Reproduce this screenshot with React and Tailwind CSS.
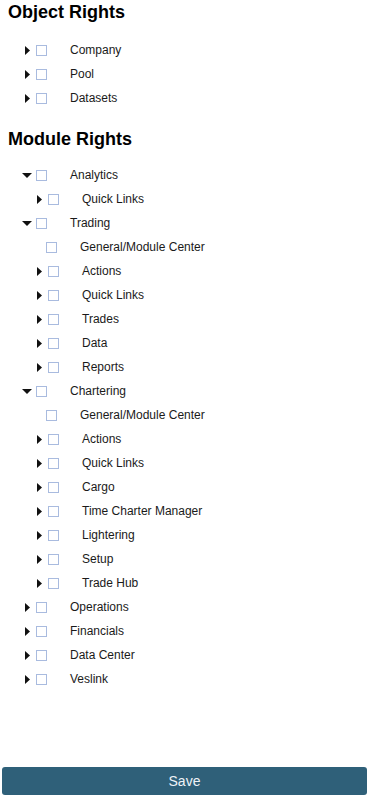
import { useState } from 'react'

const OBJECT_RIGHTS = [
  { label: 'Company', children: [] },
  { label: 'Pool', children: [] },
  { label: 'Datasets', children: [] },
]

const MODULE_RIGHTS = [
  { label: 'Analytics', open: true, children: [{ label: 'Quick Links', children: [] }] },
  {
    label: 'Trading',
    open: true,
    children: [
      { label: 'General/Module Center', leaf: true },
      { label: 'Actions', children: [] },
      { label: 'Quick Links', children: [] },
      { label: 'Trades', children: [] },
      { label: 'Data', children: [] },
      { label: 'Reports', children: [] },
    ],
  },
  {
    label: 'Chartering',
    open: true,
    children: [
      { label: 'General/Module Center', leaf: true },
      { label: 'Actions', children: [] },
      { label: 'Quick Links', children: [] },
      { label: 'Cargo', children: [] },
      { label: 'Time Charter Manager', children: [] },
      { label: 'Lightering', children: [] },
      { label: 'Setup', children: [] },
      { label: 'Trade Hub', children: [] },
    ],
  },
  { label: 'Operations', children: [] },
  { label: 'Financials', children: [] },
  { label: 'Data Center', children: [] },
  { label: 'Veslink', children: [] },
]

function Caret({ open }) {
  if (open) {
    return (
      <svg width="10" height="5" viewBox="0 0 10 5">
        <polygon points="0,0 10,0 5,5" fill="#111" />
      </svg>
    )
  }
  return (
    <svg width="5" height="9" viewBox="0 0 5 9">
      <polygon points="0,0 5,4.5 0,9" fill="#111" />
    </svg>
  )
}

function TreeNode({ node, level }) {
  const [open, setOpen] = useState(!!node.open)
  const pad = level === 0 ? 'pl-[20px]' : 'pl-[32px]'

  return (
    <>
      <div className={`flex items-center h-6 ${pad}`}>
        {node.leaf ? (
          <span className="w-[14px] shrink-0" />
        ) : (
          <button
            onClick={() => setOpen((o) => !o)}
            className="w-[14px] h-[14px] shrink-0 flex items-center justify-center"
          >
            <Caret open={open} />
          </button>
        )}
        <span
          className={`w-[11px] h-[11px] shrink-0 border border-[#a9bbdf] bg-white ${node.leaf ? '' : 'ml-[2px]'}`}
        />
        <span className="ml-[23px] text-[12px] text-[#1a1a1a] whitespace-nowrap">{node.label}</span>
      </div>
      {open && node.children?.map((c, i) => <TreeNode key={i} node={c} level={level + 1} />)}
    </>
  )
}

export default function App() {
  return (
    <div className="h-screen flex flex-col bg-white font-['Liberation_Sans',Arial,sans-serif]">
      <div className="flex-1 overflow-y-auto">
        {/* Object rights */}
        <h3 className="pl-[8px] pt-[1px] text-[18px] leading-[22px] font-black text-black">Object Rights</h3>
        <div className="mt-[15px]">
          {OBJECT_RIGHTS.map((n, i) => <TreeNode key={i} node={n} level={0} />)}
        </div>

        {/* Module rights */}
        <h3 className="pl-[8px] mt-[18px] text-[18px] leading-[22px] font-black text-black">Module Rights</h3>
        <div className="mt-[13px]">
          {MODULE_RIGHTS.map((n, i) => <TreeNode key={i} node={n} level={0} />)}
        </div>
      </div>

      <button className="mx-[2px] mb-[14px] h-[28px] rounded-[3px] bg-[#2f6079] text-[14px] text-[#eef2f7]">
        Save
      </button>
    </div>
  )
}
